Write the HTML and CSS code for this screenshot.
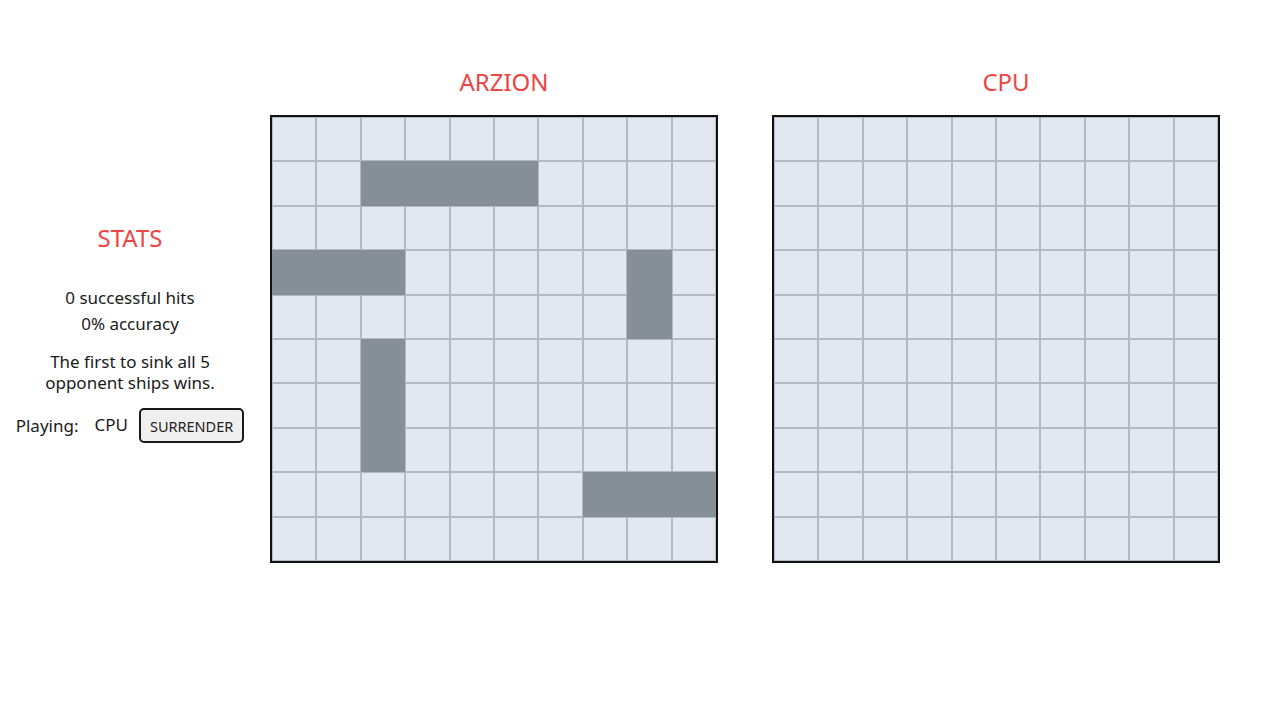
FILE: index.html
```html
<!DOCTYPE html>
<html lang="en">
<head>
<meta charset="utf-8">
<title>Battleship</title>
<link rel="stylesheet" href="styles.css">
</head>
<body>
<main class="game">
  <aside class="stats">
    <h2 class="stats-title">STATS</h2>
    <p class="stat">0 successful hits</p>
    <p class="stat">0% accuracy</p>
    <p class="rules">The first to sink all 5<br>opponent ships wins.</p>
    <div class="turn">
      <span class="turn-label">Playing:</span>
      <span class="turn-player">CPU</span>
      <button class="surrender" type="button">SURRENDER</button>
    </div>
  </aside>
  <section class="board-col">
    <h2 class="player-name">ARZION</h2>
    <div class="board" id="player-board"></div>
  </section>
  <section class="board-col">
    <h2 class="player-name">CPU</h2>
    <div class="board" id="cpu-board"></div>
  </section>
</main>
<script>
  var ships = [
    [1,2],[1,3],[1,4],[1,5],
    [3,0],[3,1],[3,2],
    [3,8],[4,8],
    [5,2],[6,2],[7,2],
    [8,7],[8,8],[8,9]
  ];
  var shipSet = {};
  ships.forEach(function (s) { shipSet[s[0] + "-" + s[1]] = true; });
  function build(id, showShips) {
    var board = document.getElementById(id);
    for (var r = 0; r < 10; r++) {
      for (var c = 0; c < 10; c++) {
        var cell = document.createElement("div");
        cell.className = "cell" + (showShips && shipSet[r + "-" + c] ? " ship" : "");
        board.appendChild(cell);
      }
    }
  }
  build("player-board", true);
  build("cpu-board", false);
</script>
</body>
</html>
```

FILE: styles.css
```css
* { box-sizing: border-box; }

html, body {
  margin: 0;
  padding: 0;
  background: #ffffff;
}

body {
  font-family: "Noto Sans", "Open Sans", sans-serif;
  color: #1a1a1a;
  font-size: 17px;
}

.game {
  display: flex;
  align-items: flex-start;
  padding-top: 66px;
}

.stats {
  width: 260px;
  margin-right: 10px;
  margin-top: 156px;
  display: flex;
  flex-direction: column;
  align-items: center;
  text-align: center;
}

.stats-title,
.player-name {
  margin: 0;
  font-size: 24px;
  font-weight: 400;
  line-height: 32px;
  color: #ef4444;
}

.stats-title {
  margin-bottom: 33px;
}

.stat {
  margin: 0 0 4px;
  font-size: 17px;
  line-height: 22px;
}

.rules {
  margin: 12px 0 15px;
  font-size: 17px;
  line-height: 21px;
}

.turn {
  display: flex;
  align-items: center;
  font-size: 17px;
}

.turn-label {
  margin-right: 16px;
}

.turn-player {
  margin-right: 11px;
  position: relative;
  top: -1px;
}

.surrender {
  font-family: "Noto Sans", "Open Sans", sans-serif;
  font-size: 14.5px;
  color: #222;
  background: #efefef;
  border: 2px solid #1a1a1a;
  border-radius: 5px;
  height: 35px;
  padding: 0 9px;
}

.board-col {
  width: 468px;
  margin-right: 34px;
  display: flex;
  flex-direction: column;
  align-items: flex-start;
}

.board-col .player-name {
  align-self: stretch;
  text-align: center;
  margin-bottom: 17px;
}

.board {
  width: 448px;
  height: 448px;
  border: 2px solid #111111;
  display: grid;
  grid-template-columns: repeat(10, 1fr);
  grid-template-rows: repeat(10, 1fr);
}

.cell {
  background: #e2e8f0;
  border: 1px solid #b3b9c0;
}

.cell.ship {
  background: #868e96;
  border-color: #868e96;
}
```
